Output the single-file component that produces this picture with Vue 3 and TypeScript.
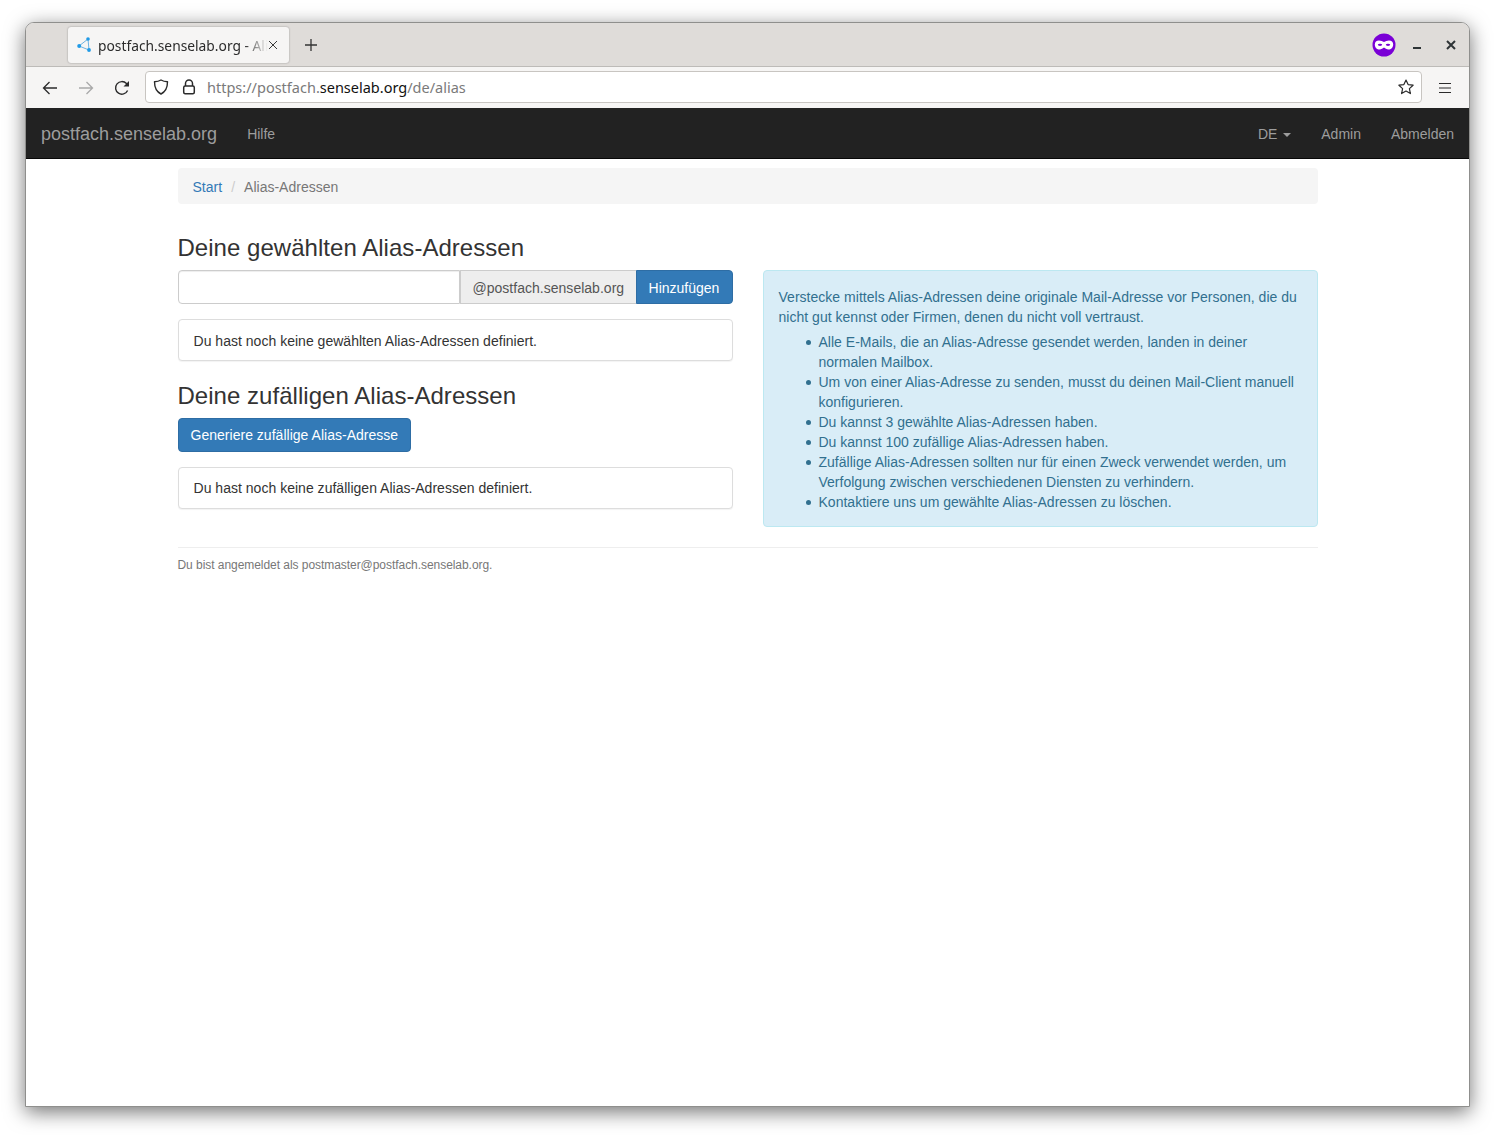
<script setup lang="ts">
const bullets: string[] = [
  'Alle E-Mails, die an Alias-Adresse gesendet werden, landen in deiner normalen Mailbox.',
  'Um von einer Alias-Adresse zu senden, musst du deinen Mail-Client manuell konfigurieren.',
  'Du kannst 3 gewählte Alias-Adressen haben.',
  'Du kannst 100 zufällige Alias-Adressen haben.',
  'Zufällige Alias-Adressen sollten nur für einen Zweck verwendet werden, um Verfolgung zwischen verschiedenen Diensten zu verhindern.',
  'Kontaktiere uns um gewählte Alias-Adressen zu löschen.',
]
</script>

<template>
  <div class="desktop">
    <div class="window">
      <div class="tabbar">
        <div class="tab">
          <svg class="favicon" width="16" height="16" viewBox="0 0 16 16">
            <path d="M11 2 2 9l10 4z" fill="none" stroke="#6db2e2" stroke-width="1" />
            <circle cx="11" cy="2" r="1.800" fill="#1f9ae6" />
            <circle cx="2.200" cy="9" r="2" fill="#1f9ae6" />
            <circle cx="12" cy="13" r="1.900" fill="#1f9ae6" />
          </svg>
          <span class="tab-title">postfach.senselab.org - Alias-Adressen</span>
          <svg class="tab-close" width="10" height="10" viewBox="0 0 10 10">
            <path d="M1 1l8 8M9 1l-8 8" stroke="#3a3a3a" stroke-width="1" />
          </svg>
        </div>
        <svg class="newtab" width="14" height="14" viewBox="0 0 14 14">
          <path d="M7 1v12M1 7h12" stroke="#333" stroke-width="1.300" />
        </svg>
        <div class="spacer"></div>
        <svg class="mask" width="24" height="24" viewBox="0 0 24 24">
          <circle cx="12" cy="12" r="11.500" fill="#7a00d6" />
          <path d="M2.800 11.500c0-2.500 1.700-3.900 4.200-3.900 2 0 3.500.8 5 1.300 1.500-.5 3-1.300 5-1.300 2.500 0 4.200 1.400 4.200 3.900 0 3-2.200 5-4.700 5-2 0-3-1-4.500-1.900-1.500.9-2.500 1.900-4.500 1.900-2.500 0-4.700-2-4.700-5z" fill="#fff" />
          <ellipse cx="8" cy="11.800" rx="2.200" ry="1.100" fill="#7a00d6" />
          <ellipse cx="16" cy="11.800" rx="2.200" ry="1.100" fill="#7a00d6" />
        </svg>
        <svg class="win-min" width="10" height="10" viewBox="0 0 10 10">
          <path d="M1 8h8" stroke="#2e3436" stroke-width="2" />
        </svg>
        <svg class="win-close" width="10" height="10" viewBox="0 0 10 10">
          <path d="M1 1l8 8M9 1l-8 8" stroke="#2e3436" stroke-width="2" />
        </svg>
      </div>

      <div class="toolbar">
        <svg class="tool back" width="16" height="16" viewBox="0 0 16 16">
          <path d="M15 8H1.500M7.500 2 1.500 8l6 6" fill="none" stroke="#2b2b2b" stroke-width="1.300" />
        </svg>
        <svg class="tool forward" width="16" height="16" viewBox="0 0 16 16">
          <path d="M1 8h13.500M8.500 2l6 6-6 6" fill="none" stroke="#a9a9a9" stroke-width="1.300" />
        </svg>
        <svg class="tool reload" width="16" height="16" viewBox="0 0 16 16">
          <path d="M13.600 10.500A6.300 6.300 0 1 1 12.500 3.600L14.500 5.600" fill="none" stroke="#2b2b2b" stroke-width="1.400" />
          <path d="M15 1v5.500H9.500z" fill="#2b2b2b" />
        </svg>
        <div class="urlbar">
          <svg class="shield" width="16" height="16" viewBox="0 0 16 16">
            <path d="M8 1c2 1.200 4 1.700 6.500 1.800 0 5.500-1.500 9.800-6.500 12.200C3 12.600 1.500 8.300 1.500 2.800 4 2.700 6 2.200 8 1z" fill="none" stroke="#2b2b2b" stroke-width="1.400" stroke-linejoin="round" />
          </svg>
          <svg class="lock" width="14" height="16" viewBox="0 0 14 16">
            <path d="M3.500 7V4.500a3.500 3.500 0 0 1 7 0V7" fill="none" stroke="#2b2b2b" stroke-width="1.500" />
            <rect x="1.700" y="7" width="10.600" height="7.800" rx="1.500" fill="none" stroke="#2b2b2b" stroke-width="1.500" />
          </svg>
          <span class="url"><span class="dim">https://postfach.</span>senselab.org<span class="dim">/de/alias</span></span>
          <div class="spacer"></div>
          <svg class="star" width="16" height="16" viewBox="0 0 16 16">
            <path d="M8 1l2.100 4.600 5 .6-3.700 3.400 1 5L8 12.100 3.600 14.600l1-5L.9 6.200l5-.6z" fill="none" stroke="#2b2b2b" stroke-width="1.200" stroke-linejoin="round" />
          </svg>
        </div>
        <svg class="hamburger" width="14" height="12" viewBox="0 0 14 12">
          <path d="M1 1.500h12M1 6h12M1 10.500h12" stroke="#2b2b2b" stroke-width="1.200" />
        </svg>
      </div>

      <div class="page">
        <nav class="navbar">
          <a class="brand">postfach.senselab.org</a>
          <a class="nav-link">Hilfe</a>
          <div class="spacer"></div>
          <a class="nav-link">DE <span class="caret"></span></a>
          <a class="nav-link">Admin</a>
          <a class="nav-link">Abmelden</a>
        </nav>

        <div class="container">
          <ol class="breadcrumb">
            <li class="crumb-link">Start</li>
            <li class="crumb-sep">/</li>
            <li class="crumb-active">Alias-Adressen</li>
          </ol>

          <div class="row">
            <div class="col">
              <h3 class="heading first">Deine gewählten Alias-Adressen</h3>
              <div class="input-group">
                <input class="input" type="text" />
                <span class="addon">@postfach.senselab.org</span>
                <button class="btn joined">Hinzufügen</button>
              </div>
              <div class="panel upper">Du hast noch keine gewählten Alias-Adressen definiert.</div>

              <h3 class="heading second">Deine zufälligen Alias-Adressen</h3>
              <button class="btn">Generiere zufällige Alias-Adresse</button>
              <div class="panel">Du hast noch keine zufälligen Alias-Adressen definiert.</div>
            </div>
            <div class="col">
              <div class="alert">
                <p>Verstecke mittels Alias-Adressen deine originale Mail-Adresse vor Personen, die du nicht gut kennst oder Firmen, denen du nicht voll vertraust.</p>
                <ul>
                  <li v-for="b in bullets" :key="b">{{ b }}</li>
                </ul>
              </div>
            </div>
          </div>

          <footer class="footer">Du bist angemeldet als postmaster@postfach.senselab.org.</footer>
        </div>
      </div>
    </div>
  </div>
</template>

<style scoped>
.desktop {
  box-sizing: border-box;
  width: 1495px;
  height: 1135px;
  padding: 22px 25px 28px 25px;
  background: #fff;
  overflow: hidden;
}
.window {
  box-sizing: border-box;
  height: 1085px;
  display: flex;
  flex-direction: column;
  border: 1px solid #8f8f8d;
  border-radius: 9px 9px 0 0;
  overflow: hidden;
  background: #fff;
  box-shadow: 0 5px 20px rgba(0, 0, 0, 0.55);
  font-family: "Liberation Sans", Arial, sans-serif;
}
.spacer { flex: 1; }

.tabbar {
  height: 43px;
  flex: none;
  display: flex;
  align-items: center;
  background: #dfdcd9;
  padding-left: 42px;
  border-bottom: 1px solid #bdbbb8;
  box-sizing: content-box;
}
.tab {
  box-sizing: border-box;
  width: 221px;
  height: 36px;
  margin-top: 1px;
  display: flex;
  align-items: center;
  background: #f6f5f4;
  border-radius: 3px;
  box-shadow: 0 0 2px rgba(0, 0, 0, 0.35);
  padding-left: 9px;
  position: relative;
}
.favicon { flex: none; margin-right: 5px; }
.tab-title {
  font: 13.800px "Noto Sans", "Open Sans", sans-serif;
  color: #2b2b2b;
  white-space: nowrap;
  overflow: hidden;
  flex: none;
  width: 170px;
  -webkit-mask-image: linear-gradient(to right, #000 146px, transparent 170px);
  mask-image: linear-gradient(to right, #000 146px, transparent 170px);
}
.tab-close { margin-top: -1px; flex: none; }
.newtab { margin-left: 15px; flex: none; }
.mask { margin-right: 16px; flex: none; margin-top: 1px; }
.win-min { margin-right: 24px; flex: none; }
.win-close { margin-right: 13px; flex: none; }

.toolbar {
  height: 41px;
  flex: none;
  display: flex;
  align-items: center;
  background: #f6f5f4;
  box-sizing: border-box;
  padding-left: 16px;
}
.tool { flex: none; }
.forward { margin-left: 20px; }
.reload { margin-left: 20px; }
.urlbar {
  box-sizing: border-box;
  width: 1277px;
  height: 32px;
  margin-left: 15px;
  margin-top: -1px;
  display: flex;
  align-items: center;
  background: #fff;
  border: 1px solid #c8c5c1;
  border-radius: 4px;
  padding: 0 7px 0 7px;
}
.lock { margin-left: 13px; flex: none; }
.shield { flex: none; }
.url {
  margin-left: 11px;
  font: 14.500px "Noto Sans", "Open Sans", sans-serif;
  color: #111;
  white-space: nowrap;
}
.dim { color: #7a7a7a; }
.star { flex: none; }
.hamburger { margin-left: 16px; flex: none; }

.page {
  flex: 1;
  min-height: 0;
  background: #fff;
  font-size: 14px;
  line-height: 20px;
  color: #333;
}
.navbar {
  box-sizing: border-box;
  height: 51px;
  display: flex;
  align-items: center;
  background: #222;
  border-bottom: 1px solid #080808;
  padding: 0 15px;
}
.brand {
  font-size: 18px;
  color: #9d9d9d;
  margin-right: 15px;
  padding-top: 2px;
}
.nav-link {
  color: #9d9d9d;
  padding: 2px 15px 0;
}
.nav-link:last-child { padding-right: 0; }
.caret {
  display: inline-block;
  width: 0;
  height: 0;
  margin-left: 2px;
  vertical-align: middle;
  border-top: 4px solid #9d9d9d;
  border-left: 4px solid transparent;
  border-right: 4px solid transparent;
}
.container {
  box-sizing: border-box;
  width: 1170px;
  margin: 0 auto;
  padding: 9px 15px 0;
  letter-spacing: 0.02px;
}
.breadcrumb {
  list-style: none;
  margin: 0 0 20px;
  padding: 9px 15px 7px;
  background: #f5f5f5;
  border-radius: 4px;
  display: flex;
}
.crumb-link { color: #337ab7; }
.crumb-sep { color: #ccc; padding: 0 9px; }
.crumb-active { color: #777; letter-spacing: 0; }
.row {
  display: grid;
  grid-template-columns: 555px 555px;
  gap: 30px;
}
.heading {
  font-size: 24px;
  font-weight: 500;
  line-height: 26.400px;
  color: #333;
  margin: 20px 0 10px;
  letter-spacing: 0.035px;
}
.heading.first { margin-top: 11px; margin-bottom: 9px; }
.heading.second { margin-top: 22px; margin-bottom: 8px; }
.input-group {
  display: flex;
  height: 34px;
}
.input {
  box-sizing: border-box;
  flex: 1;
  min-width: 0;
  height: 34px;
  padding: 6px 12px;
  border: 1px solid #ccc;
  border-radius: 4px 0 0 4px;
  background: #fff;
  box-shadow: inset 0 1px 1px rgba(0, 0, 0, 0.075);
  outline: none;
}
.addon {
  box-sizing: border-box;
  flex: none;
  width: 176px;
  padding: 7px 0 5px 12px;
  line-height: 20px;
  color: #555;
  background: #eee;
  border: 1px solid #ccc;
  border-right: 0;
  white-space: nowrap;
}
.btn {
  box-sizing: border-box;
  height: 34px;
  padding: 6px 12px;
  font: 14px/20px "Liberation Sans", Arial, sans-serif;
  letter-spacing: 0.02px;
  color: #fff;
  background: #337ab7;
  border: 1px solid #2e6da4;
  border-radius: 4px;
  white-space: nowrap;
  display: block;
}
.btn.joined {
  flex: none;
  width: 97px;
  border-radius: 0 4px 4px 0;
  padding: 7px 0 5px;
  letter-spacing: 0;
}
.panel {
  box-sizing: border-box;
  height: 42px;
  margin-top: 15px;
  padding: 10px 15px;
  border: 1px solid #ddd;
  border-radius: 4px;
  background: #fff;
  box-shadow: 0 1px 1px rgba(0, 0, 0, 0.05);
}
.panel.upper { padding-top: 11px; }
.alert {
  box-sizing: border-box;
  margin-top: 46px;
  padding: 16px 15px 14px;
  color: #31708f;
  background: #d9edf7;
  border: 1px solid #bce8f1;
  border-radius: 4px;
}
.alert p { margin: 0 0 5px; }
.alert ul { margin: 0; padding-left: 40px; list-style: none; letter-spacing: 0.01px; }
.alert li { position: relative; }
.alert li::before {
  content: "";
  position: absolute;
  left: -13px;
  top: 8px;
  width: 5px;
  height: 5px;
  border-radius: 50%;
  background: #31708f;
}
.footer {
  margin-top: 20px;
  padding-top: 9px;
  border-top: 1px solid #eee;
  font-size: 12px;
  line-height: 17px;
  color: #777;
  letter-spacing: -0.05px;
}
</style>
